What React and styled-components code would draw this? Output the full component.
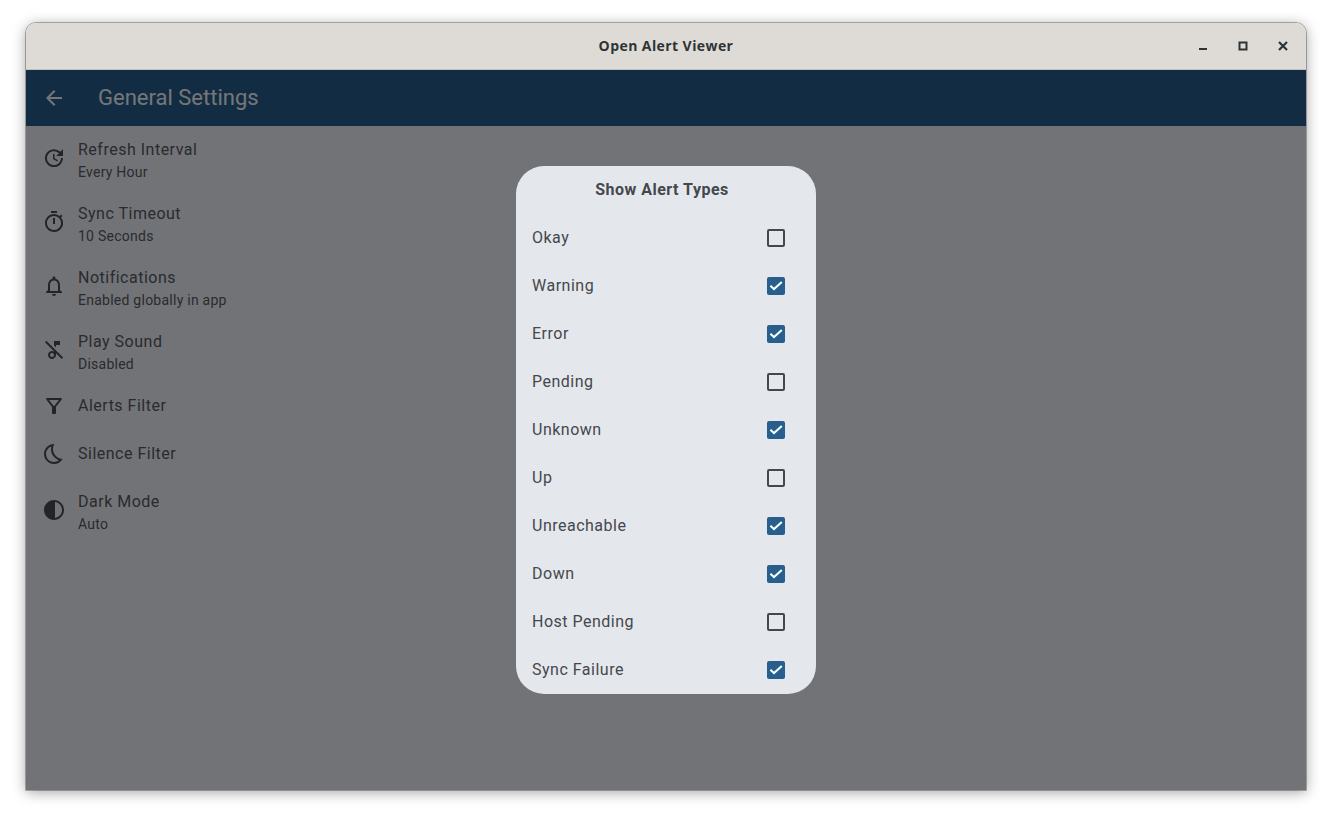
import React from "react";
import styled, { createGlobalStyle } from "styled-components";
import {
  MdArrowBack,
  MdContrast,
  MdOutlineBedtime,
  MdOutlineFilterAlt,
  MdOutlineMusicOff,
  MdOutlineNotifications,
  MdOutlineTimer,
  MdUpdate,
} from "react-icons/md";

const GlobalStyle = createGlobalStyle`
  html, body {
    margin: 0;
    padding: 0;
    background: #ffffff;
    font-family: Roboto, sans-serif;
    overflow: hidden;
  }
`;

const Page = styled.div`
  width: 1332px;
  height: 819px;
  padding: 23px 26px 0;
  box-sizing: border-box;
`;

const Window = styled.div`
  width: 1280px;
  height: 767px;
  display: flex;
  flex-direction: column;
  border-radius: 10px 10px 0 0;
  overflow: hidden;
  outline: 1px solid rgba(0, 0, 0, 0.28);
  box-shadow: 0 2px 14px rgba(0, 0, 0, 0.38);
`;

const TitleBar = styled.header`
  position: relative;
  flex: 0 0 47px;
  display: flex;
  align-items: center;
  justify-content: center;
  box-sizing: border-box;
  padding-bottom: 2px;
  background: #dedbd7;
  border-bottom: 1px solid #c6c3be;
`;

const WindowTitle = styled.span`
  font-family: "Open Sans", sans-serif;
  font-size: 14px;
  font-weight: 700;
  letter-spacing: 0.42px;
  color: #2e3436;
`;

const WindowControls = styled.div`
  position: absolute;
  right: 3px;
  top: 0;
  height: 46px;
  display: flex;
  align-items: center;
`;

const ControlButton = styled.span`
  width: 40px;
  height: 40px;
  display: flex;
  align-items: center;
  justify-content: center;
  color: #2e3436;
`;

const Content = styled.main`
  position: relative;
  flex: 1;
  display: flex;
  flex-direction: column;
  background: #f8f9ff;
`;

const AppBar = styled.div`
  flex: 0 0 56px;
  display: flex;
  align-items: center;
  padding-left: 16px;
  background: #275f8e;
  color: #ffffff;
`;

const BackIcon = styled(MdArrowBack)`
  font-size: 24px;
  margin-right: 32px;
`;

const PageTitle = styled.h1`
  margin: 0;
  font-size: 22px;
  font-weight: 400;
  line-height: 28px;
`;

const SettingsList = styled.ul`
  list-style: none;
  margin: 0;
  padding: 0;
`;

const SettingsItem = styled.li`
  height: ${({ $tall }) => ($tall ? "64px" : "48px")};
  display: flex;
  align-items: center;
  padding-left: 16px;
  color: #5a5c62;

  svg {
    flex: none;
    font-size: 24px;
    margin-right: 12px;
    color: #4c4e54;
  }
`;

const ItemText = styled.div`
  display: flex;
  flex-direction: column;
  padding-top: ${({ $tall }) => ($tall ? "4px" : "0")};
`;

const ItemTitle = styled.span`
  font-size: 16px;
  line-height: 24px;
  letter-spacing: 0.5px;
`;

const ItemSubtitle = styled.span`
  font-size: 14px;
  line-height: 20px;
  letter-spacing: 0.25px;
`;

const Scrim = styled.div`
  position: absolute;
  inset: 0;
  display: flex;
  align-items: center;
  justify-content: center;
  background: rgba(0, 1, 4, 0.54);
`;

const Dialog = styled.section`
  width: 300px;
  height: 528px;
  box-sizing: border-box;
  border-radius: 28px;
  background: #e4e7ec;
  color: #44474c;
`;

const DialogTitle = styled.h2`
  margin: 0;
  height: 48px;
  box-sizing: border-box;
  display: flex;
  align-items: center;
  justify-content: center;
  padding: 0 8px 2px 0;
  font-size: 16px;
  font-weight: 700;
  letter-spacing: 0.5px;
`;

const OptionRow = styled.label`
  height: 48px;
  display: flex;
  align-items: center;
  justify-content: space-between;
  padding: 0 31px 0 16px;
  font-size: 16px;
  letter-spacing: 0.5px;
`;

const OptionName = styled.span`
  padding-bottom: 2px;
`;

const CheckBox = styled.span`
  width: 18px;
  height: 18px;
  box-sizing: border-box;
  display: flex;
  align-items: center;
  justify-content: center;
  border-radius: 2px;
  border: ${({ $checked }) => ($checked ? "none" : "2px solid #44474c")};
  background: ${({ $checked }) => ($checked ? "#275f8e" : "transparent")};
`;

const settings = [
  { icon: MdUpdate, title: "Refresh Interval", subtitle: "Every Hour" },
  { icon: MdOutlineTimer, title: "Sync Timeout", subtitle: "10 Seconds" },
  { icon: MdOutlineNotifications, title: "Notifications", subtitle: "Enabled globally in app" },
  { icon: MdOutlineMusicOff, title: "Play Sound", subtitle: "Disabled" },
  { icon: MdOutlineFilterAlt, title: "Alerts Filter" },
  { icon: MdOutlineBedtime, title: "Silence Filter" },
  { icon: MdContrast, title: "Dark Mode", subtitle: "Auto" },
];

const alertTypes = [
  { name: "Okay", checked: false },
  { name: "Warning", checked: true },
  { name: "Error", checked: true },
  { name: "Pending", checked: false },
  { name: "Unknown", checked: true },
  { name: "Up", checked: false },
  { name: "Unreachable", checked: true },
  { name: "Down", checked: true },
  { name: "Host Pending", checked: false },
  { name: "Sync Failure", checked: true },
];

export default function App() {
  return (
    <Page>
      <GlobalStyle />
      <Window>
        <TitleBar>
          <WindowTitle>Open Alert Viewer</WindowTitle>
          <WindowControls>
            <ControlButton>
              <svg width="10" height="10" viewBox="0 0 10 10">
                <rect x="1" y="7" width="8" height="2" fill="currentColor" />
              </svg>
            </ControlButton>
            <ControlButton>
              <svg width="10" height="10" viewBox="0 0 10 10">
                <rect x="1.5" y="1.5" width="7" height="7" fill="none" stroke="currentColor" strokeWidth="2" />
              </svg>
            </ControlButton>
            <ControlButton>
              <svg width="10" height="10" viewBox="0 0 10 10">
                <path d="M1 1l8 8M9 1l-8 8" fill="none" stroke="currentColor" strokeWidth="2.2" />
              </svg>
            </ControlButton>
          </WindowControls>
        </TitleBar>
        <Content>
          <AppBar>
            <BackIcon />
            <PageTitle>General Settings</PageTitle>
          </AppBar>
          <SettingsList>
            {settings.map(({ icon: Icon, title, subtitle }) => (
              <SettingsItem key={title} $tall={Boolean(subtitle)}>
                <Icon />
                <ItemText $tall={Boolean(subtitle)}>
                  <ItemTitle>{title}</ItemTitle>
                  {subtitle && <ItemSubtitle>{subtitle}</ItemSubtitle>}
                </ItemText>
              </SettingsItem>
            ))}
          </SettingsList>
          <Scrim>
            <Dialog>
              <DialogTitle>Show Alert Types</DialogTitle>
              {alertTypes.map(({ name, checked }) => (
                <OptionRow key={name}>
                  <OptionName>{name}</OptionName>
                  <CheckBox $checked={checked}>
                    {checked && (
                      <svg width="18" height="18" viewBox="0 0 18 18">
                        <path d="M3.4 8.8L7 12.1L14.8 4.9" fill="none" stroke="#ffffff" strokeWidth="2" />
                      </svg>
                    )}
                  </CheckBox>
                </OptionRow>
              ))}
            </Dialog>
          </Scrim>
        </Content>
      </Window>
    </Page>
  );
}
